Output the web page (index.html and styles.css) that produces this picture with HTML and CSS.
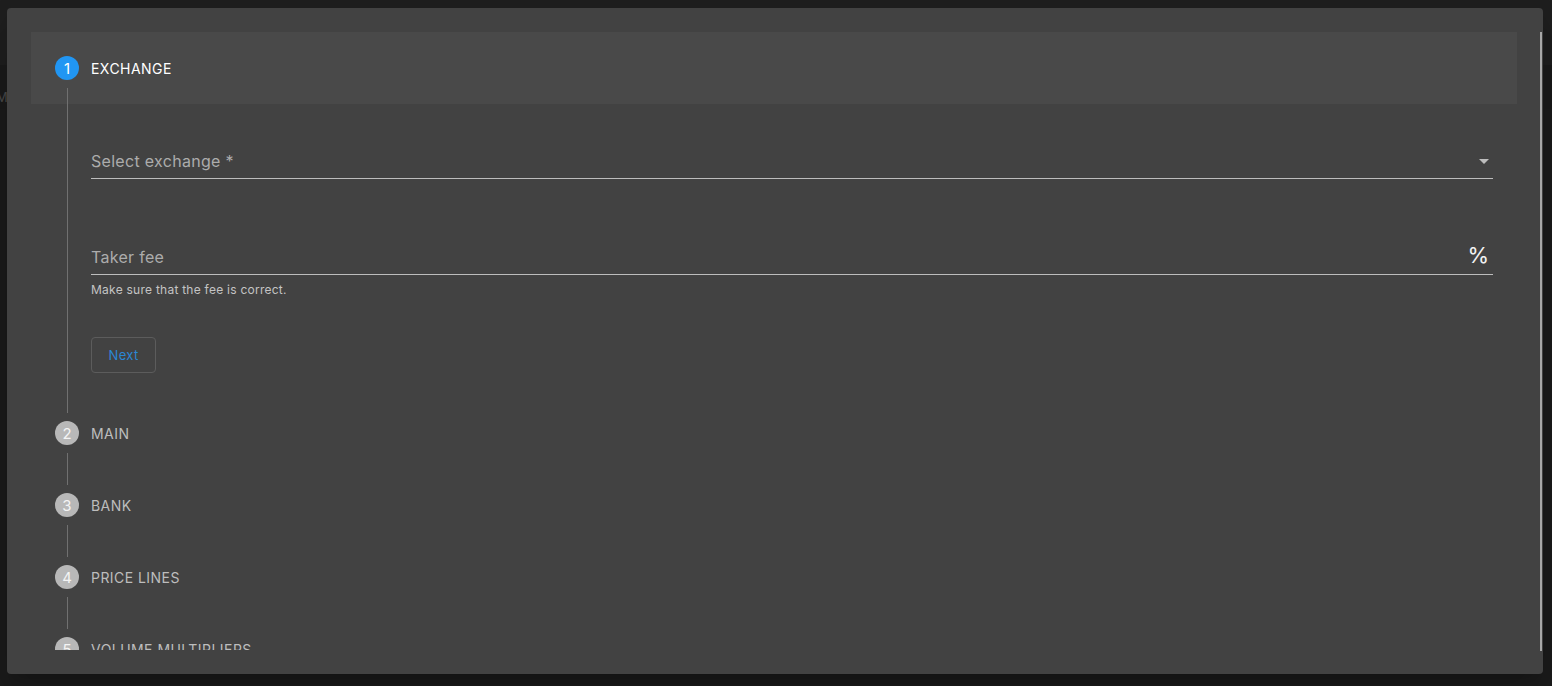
FILE: index.html
```html
<!DOCTYPE html>
<html lang="en">
<head>
<meta charset="utf-8">
<title>Stepper</title>
<link rel="stylesheet" href="styles.css">
</head>
<body>
<div class="app">
  <div class="app-top"></div>
  <div class="app-row"><span class="app-text">Mo</span></div>
</div>
<div class="dialog">
  <div class="scroll">
    <div class="step active">
      <div class="step-head">
        <span class="step-icon">1</span>
        <span class="step-label">EXCHANGE</span>
      </div>
      <div class="step-body">
        <div class="field field-select">
          <span class="field-label">Select exchange *</span>
          <svg class="arrow" width="10" height="5" viewBox="0 0 10 5"><path d="M0 0h10L5 5z" fill="#bdbdbd"/></svg>
        </div>
        <div class="field field-fee">
          <span class="field-label">Taker fee</span>
          <span class="adorn">%</span>
        </div>
        <div class="helper">Make sure that the fee is correct.</div>
        <button class="btn-next" type="button">Next</button>
      </div>
    </div>
    <div class="step">
      <div class="step-head">
        <span class="step-icon">2</span>
        <span class="step-label">MAIN</span>
      </div>
      <div class="step-body"></div>
    </div>
    <div class="step">
      <div class="step-head">
        <span class="step-icon">3</span>
        <span class="step-label">BANK</span>
      </div>
      <div class="step-body"></div>
    </div>
    <div class="step">
      <div class="step-head">
        <span class="step-icon">4</span>
        <span class="step-label">PRICE LINES</span>
      </div>
      <div class="step-body"></div>
    </div>
    <div class="step">
      <div class="step-head">
        <span class="step-icon">5</span>
        <span class="step-label">VOLUME MULTIPLIERS</span>
      </div>
    </div>
  </div>
</div>
</body>
</html>
```
FILE: styles.css
```css
* { box-sizing: border-box; }
html, body { margin: 0; height: 100%; }
body {
  background: #1b1b1b;
  font-family: Inter, "Open Sans", sans-serif;
  overflow: hidden;
}
.app-top { height: 65px; background: #1e1e1e; }
.app-row { height: 44px; background: #1a1a1a; padding-top: 21px; }
.app-text { color: #4a4a4a; font-size: 13px; margin-left: -4px; }

.dialog {
  position: absolute;
  left: 7px;
  top: 8px;
  width: 1536px;
  height: 666px;
  background: #424242;
  border-radius: 4px;
  padding: 24px 0 24px 24px;
  display: flex;
  box-shadow: 0 11px 15px -7px rgba(0,0,0,.2), 0 24px 38px 3px rgba(0,0,0,.14);
}
.dialog::after {
  content: "";
  position: absolute;
  right: 1px;
  top: 24px;
  bottom: 23px;
  width: 2px;
  background: #a8a8a8;
}
.scroll {
  flex: 1;
  overflow: hidden;
  padding-right: 26px;
}
.step-head {
  height: 72px;
  padding: 0 24px;
  display: flex;
  align-items: center;
  gap: 12px;
}
.step.active .step-head { background: #494949; }
.step-icon {
  width: 24px;
  height: 24px;
  border-radius: 50%;
  background: #b8b8b8;
  color: #f4f4f4;
  font-size: 15px;
  display: flex;
  align-items: center;
  justify-content: center;
  flex: none;
}
.step.active .step-icon { background: #2196f3; color: #fff; }
.step-label {
  font-size: 14px;
  color: #bdbdbd;
  letter-spacing: 0.45px;
}
.step.active .step-label { color: #fff; }

.step-body {
  position: relative;
  margin-left: 36px;
  padding: 26px 24px 24px 24px;
}
.step-body::before {
  content: "";
  position: absolute;
  left: 0;
  top: -16px;
  bottom: -16px;
  width: 1px;
  background: #707070;
}
.step:not(.active) .step-body { padding: 0; height: 0; }

.field {
  position: relative;
  height: 49px;
  border-bottom: 1px solid #bdbdbd;
  display: flex;
  align-items: flex-end;
  justify-content: space-between;
  padding-bottom: 7px;
}
.field-fee { margin-top: 47px; }
.field-label {
  font-size: 16px;
  line-height: 19px;
  color: #acacac;
  letter-spacing: 0.3px;
}
.arrow { margin: 0 4px 7px 0; }
.adorn {
  font-size: 22px;
  line-height: 24px;
  color: #f2f2f2;
  margin-right: 4px;
  margin-bottom: 0;
}
.helper {
  margin-top: 8px;
  font-size: 12px;
  line-height: 14px;
  color: #c4c4c4;
  letter-spacing: 0.25px;
}
.btn-next {
  margin-top: 40px;
  display: block;
  height: 36px;
  width: 65px;
  background: transparent;
  border: 1px solid #5c5c5c;
  border-radius: 4px;
  color: #2b87d4;
  font-family: inherit;
  font-size: 13px;
  letter-spacing: 0.3px;
  padding: 0;
}
```
